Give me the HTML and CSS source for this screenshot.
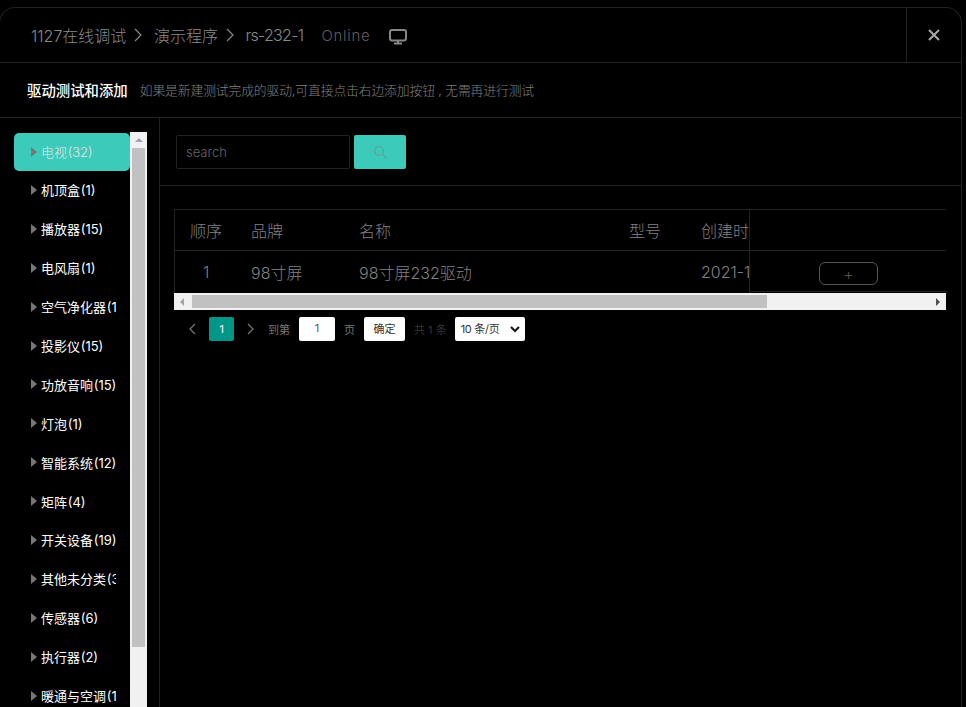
FILE: index.html
```html
<!DOCTYPE html>
<html lang="zh-CN">
<head>
  <meta charset="UTF-8">
  <title>驱动测试和添加</title>
  <link rel="stylesheet" href="styles.css">
</head>
<body>
  <div class="modal">
    <div class="head">
      <div class="crumbs">
        <span>1127在线调试</span>
        <svg class="crumb-arrow" viewBox="0 0 8 14" width="8" height="14"><path d="M1 1l6 6-6 6" /></svg>
        <span>演示程序</span>
        <svg class="crumb-arrow" viewBox="0 0 8 14" width="8" height="14"><path d="M1 1l6 6-6 6" /></svg>
        <span class="model">rs-232-1</span>
        <span class="online">Online</span>
        <svg class="screen" viewBox="0 0 18 16" width="18" height="16"><rect x="1" y="1" width="16" height="10.5" rx="2" /><path d="M9 12v2.5M5 14.5h8" /></svg>
      </div>
      <div class="close">
        <svg viewBox="0 0 12 12" width="12" height="12"><path d="M1 1l10 10M11 1L1 11" /></svg>
      </div>
    </div>
    <div class="subhead">
      <strong>驱动测试和添加</strong>
      <span>如果是新建测试完成的驱动,可直接点击右边添加按钮 , 无需再进行测试</span>
    </div>
    <div class="main">
      <div class="side">
        <ul class="cats">
          <li class="on"><i></i><span>电视 (32)</span></li>
          <li><i></i><span>机顶盒 (1)</span></li>
          <li><i></i><span>播放器 (15)</span></li>
          <li><i></i><span>电风扇 (1)</span></li>
          <li><i></i><span>空气净化器 (1)</span></li>
          <li><i></i><span>投影仪 (15)</span></li>
          <li><i></i><span>功放音响 (15)</span></li>
          <li><i></i><span>灯泡 (1)</span></li>
          <li><i></i><span>智能系统 (12)</span></li>
          <li><i></i><span>矩阵 (4)</span></li>
          <li><i></i><span>开关设备 (19)</span></li>
          <li><i></i><span>其他未分类 (3)</span></li>
          <li><i></i><span>传感器 (6)</span></li>
          <li><i></i><span>执行器 (2)</span></li>
          <li><i></i><span>暖通与空调 (1)</span></li>
        </ul>
        <div class="vbar">
          <div class="vbar-up"></div>
          <div class="vbar-thumb"></div>
        </div>
      </div>
      <div class="content">
        <div class="searchbar">
          <div class="search-input">search</div>
          <div class="search-btn">
            <svg viewBox="0 0 14 14" width="14" height="14"><circle cx="6" cy="6" r="4.5" /><path d="M9.2 9.2l3.8 3.8" /></svg>
          </div>
        </div>
        <div class="tablewrap">
          <div class="table">
            <div class="cols">
              <div class="row row-head">
                <div class="c1">顺序</div>
                <div class="c2">品牌</div>
                <div class="c3">名称</div>
                <div class="c4">型号</div>
                <div class="c5">创建时间</div>
              </div>
              <div class="row row-body">
                <div class="c1 num">1</div>
                <div class="c2">98寸屏</div>
                <div class="c3">98寸屏232驱动</div>
                <div class="c4"></div>
                <div class="c5">2021-11-27</div>
              </div>
            </div>
            <div class="fixed">
              <div class="fixed-head"></div>
              <div class="fixed-cell"><div class="add">+</div></div>
            </div>
          </div>
          <div class="hbar">
            <div class="hbar-left"></div>
            <div class="hbar-thumb"></div>
            <div class="hbar-right"></div>
          </div>
          <div class="pager">
            <svg class="pg-arrow" viewBox="0 0 8 12" width="8" height="12"><path d="M7 1L2 6l5 5" /></svg>
            <div class="pg-num">1</div>
            <svg class="pg-arrow" viewBox="0 0 8 12" width="8" height="12"><path d="M1 1l5 5-5 5" /></svg>
            <span class="pg-text goto">到第</span>
            <div class="pg-input">1</div>
            <span class="pg-text">页</span>
            <div class="pg-ok">确定</div>
            <span class="pg-total">共 1 条</span>
            <div class="pg-size"><span>10 条/页</span>
              <svg viewBox="0 0 10 7" width="10" height="7"><path d="M1 1l4 4 4-4" /></svg>
            </div>
          </div>
        </div>
      </div>
    </div>
  </div>
</body>
</html>
```

FILE: styles.css
```css
html,body{margin:0; padding:0; height:100%; background:#000; overflow:hidden;}
body{font-family:"Inter","Noto Sans CJK SC",sans-serif; color:#888;}
ul{margin:0; padding:0; list-style:none;}

.modal{box-sizing:border-box; width:963px; height:720px; margin:7px 0 0 -1px; border:1px solid #222; border-bottom:0; border-radius:16px 16px 0 0; display:flex; flex-direction:column; overflow:hidden;}

.head{height:55px; flex:none; box-sizing:border-box; display:flex; border-bottom:1px solid #222;}
.crumbs{flex:1; display:flex; align-items:center; padding-left:31px; font-size:16px; font-weight:300; color:#8a8a8a;}
.crumb-arrow{margin:0 11.5px 0 8px;}
.crumb-arrow path{fill:none; stroke:#888; stroke-width:1.2;}
.model{letter-spacing:-.7px;}
.online{margin-left:18px; font-size:15px; letter-spacing:.7px; color:#5e5e5e;}
.screen{margin-left:19px; margin-top:3px;}
.screen rect,.screen path{fill:none; stroke:#888; stroke-width:2;}
.close{width:54px; border-left:1px solid #222; display:flex; align-items:center; justify-content:center;}
.close path{stroke:#aaa; stroke-width:2; fill:none;}

.subhead{height:55px; flex:none; box-sizing:border-box; display:flex; align-items:center; padding:0 0 2px 27px; border-bottom:1px solid #222;}
.subhead strong{font-size:14.4px; font-weight:500; color:#fff;}
.subhead span{margin-left:12px; font-size:12.8px; letter-spacing:-.12px; font-weight:300; color:#808080;}

.main{flex:1; display:flex; min-height:0;}

.side{width:160px; flex:none; box-sizing:border-box; padding:15px 0 0 14px; border-right:1px solid #222; display:flex; align-items:flex-start;}
.cats{width:116px; flex:none;}
.cats li{height:38.9px; box-sizing:border-box; padding-left:17px; padding-bottom:3px; display:flex; align-items:center; font-size:13px; color:#fff; overflow:hidden; white-space:nowrap;}
.cats li span{display:block; width:75px; overflow:hidden; margin-left:4px; flex:none; white-space:nowrap; word-spacing:-3px;}
.cats li i{width:0; height:0; flex:none; border-left:6px solid #777; border-top:5px solid transparent; border-bottom:5px solid transparent;}
.cats li.on{height:38px; padding-bottom:1px; margin-bottom:1px; background:#3ccbba; border-radius:5px; color:#e4e4e4; font-weight:300;}

.vbar{width:17px; height:600px; flex:none; margin-top:-1px; background:#f1f1f1;}
.vbar-up{height:16px; position:relative;}
.vbar-up:after{content:""; position:absolute; left:5px; top:6px; border-left:4px solid transparent; border-right:4px solid transparent; border-bottom:4px solid #a3a3a3;}
.vbar-thumb{width:13px; height:499px; margin-left:2px; background:#c1c1c1;}

.content{flex:1; min-width:0;}
.searchbar{height:68px; box-sizing:border-box; padding:17px 0 0 16px; display:flex; border-bottom:1px solid #222;}
.search-input{width:174px; height:34px; box-sizing:border-box; border:1px solid #222; border-radius:2px; padding-left:9px; line-height:32px; font-size:13px; font-weight:300; color:#666;}
.search-btn{width:52px; height:34px; margin-left:4px; background:#3ccbba; border-radius:2px; display:flex; align-items:center; justify-content:center;}
.search-btn svg{fill:none; stroke:#5f9f98; stroke-width:1.2;}

.tablewrap{padding:23px 0 0 14px; width:772px;}
.table{display:flex; height:84px; box-sizing:border-box; border-top:1px solid #222; border-left:1px solid #222;}
.cols{width:574px; flex:none; overflow:hidden; font-size:16px; font-weight:300; color:#808080;}
.row{height:42px; box-sizing:border-box; display:flex; align-items:center; white-space:nowrap;}
.row-head{height:41px; border-bottom:1px solid #222; width:600px;}
.row-body{padding-bottom:1px;}
.c1{width:45px; padding-left:15px; flex:none;}
.c1.num{text-indent:13px;}
.c2{width:92px; padding-left:16px; flex:none;}
.c3{width:254px; padding-left:16px; flex:none;}
.c4{width:56px; padding-left:16px; flex:none;}
.c5{padding-left:16px; flex:none;}
.fixed{flex:1; border-left:1px solid #222;}
.fixed-head{height:40px; border-bottom:1px solid #222;}
.fixed-cell{height:41px; box-sizing:border-box; padding-top:4px; border-bottom:1px solid #222; display:flex; align-items:center; justify-content:center; margin-right:-1px;}
.add{width:59px; height:23px; box-sizing:border-box; border:1px solid #555; border-radius:6px; text-align:center; font-size:16px; font-weight:300; line-height:22px; color:#555;}

.hbar{height:17px; display:flex; align-items:center; background:#f1f1f1;}
.hbar-left{width:18px; flex:none; position:relative; height:17px;}
.hbar-left:after{content:""; position:absolute; left:6px; top:5px; border-top:4px solid transparent; border-bottom:4px solid transparent; border-right:4px solid #a3a3a3;}
.hbar-thumb{width:575px; height:13px; background:#c1c1c1; flex:none;}
.hbar-right{flex:1; height:17px; position:relative;}
.hbar-right:after{content:""; position:absolute; right:6px; top:5px; border-top:4px solid transparent; border-bottom:4px solid transparent; border-left:4px solid #505050;}

.pager{display:flex; align-items:center; height:24px; margin-top:7px; padding-left:14px; font-size:11px;}
.pg-arrow path{fill:none; stroke:#777; stroke-width:1.2;}
.pg-num{width:25px; height:24px; margin:0 13px; background:#009688; border-radius:2px; text-align:center; line-height:24px; color:#ddd; font-weight:600;}
.pg-text{color:#777;}
.goto{margin-left:13px;}
.pg-input{width:36px; height:24px; margin:0 9px; background:#fff; border-radius:2px; text-align:center; line-height:23px; color:#555;}
.pg-ok{width:41px; height:24px; margin-left:9px; background:#fff; border-radius:2px; text-align:center; line-height:24px; color:#333;}
.pg-total{margin-left:9px; color:#333;}
.pg-size{width:70px; height:24px; box-sizing:border-box; margin-left:8px; padding:0 5px 0 6px; background:#fff; border-radius:2px; display:flex; align-items:center; justify-content:space-between; color:#333; white-space:nowrap;}
.pg-size span{letter-spacing:-.3px; margin-top:-3px;}
.pg-size svg{fill:none; stroke:#111; stroke-width:2;}
```
